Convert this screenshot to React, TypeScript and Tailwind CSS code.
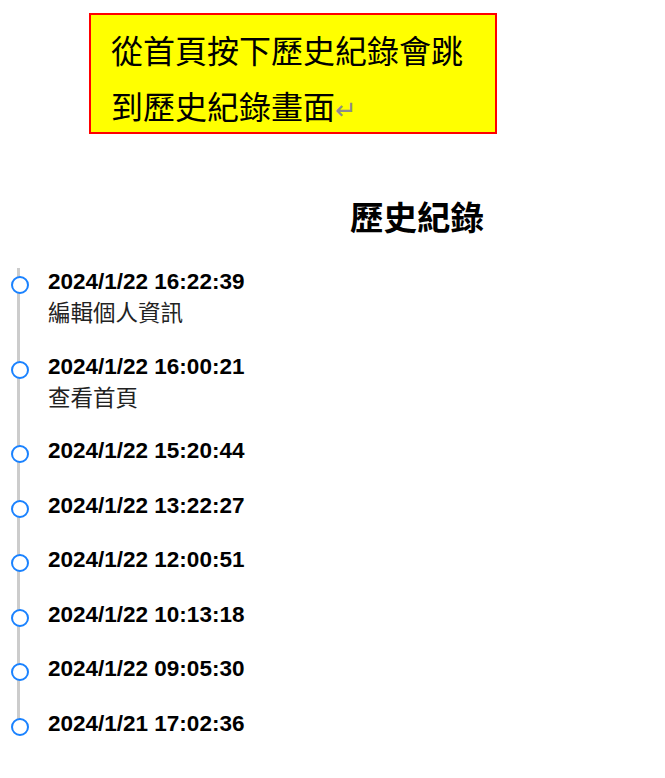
import React from 'react';

interface HistoryItem {
  time: string;
  action?: string;
}

const items: HistoryItem[] = [
  { time: '2024/1/22 16:22:39', action: '編輯個人資訊' },
  { time: '2024/1/22 16:00:21', action: '查看首頁' },
  { time: '2024/1/22 15:20:44' },
  { time: '2024/1/22 13:22:27' },
  { time: '2024/1/22 12:00:51' },
  { time: '2024/1/22 10:13:18' },
  { time: '2024/1/22 09:05:30' },
  { time: '2024/1/21 17:02:36' },
];

const App: React.FC = () => {
  return (
    <div className="min-h-[778px] bg-white font-['Liberation_Sans','Noto_Sans_CJK_TC',sans-serif] text-black">
      {/* 說明框 */}
      <div className="ml-[89px] pt-[13px]">
        <div className="w-[408px] h-[121px] border-2 border-[#ff0000] bg-[#ffff00] pl-[20px] pt-[6px] font-['Noto_Sans_CJK_TC',serif] text-[32px] leading-[56px] text-black">
          <p>從首頁按下歷史紀錄會跳</p>
          <p>
            到歷史紀錄畫面<span className="text-[#8c8c8c] text-[26px] font-['DejaVu_Sans',sans-serif]">↵</span>
          </p>
        </div>
      </div>

      <h1 className="mt-[62px] pl-[350px] text-[33.5px] leading-[40px] font-bold font-['Noto_Sans_CJK_TC',sans-serif]">
        歷史紀錄
      </h1>

      <ul className="mt-[32px]">
        {items.map((item, i) => (
          <li key={i} className="relative pl-[48px] pb-[26.5px]">
            <span
              className={
                i === items.length - 1
                  ? 'absolute left-[17px] top-0 h-[17px] w-[3px] bg-[#cccccc]'
                  : 'absolute left-[17px] top-0 bottom-0 w-[3px] bg-[#cccccc]'
              }
            />
            <span className="absolute left-[11px] top-[8px] h-[18px] w-[18px] rounded-full border-[2.5px] border-[#1a82ff] bg-white" />
            <p className="text-[22.5px] leading-[28px] font-bold">{item.time}</p>
            {item.action && (
              <p className="text-[22.5px] leading-[30px] text-[#222] font-['Noto_Sans_CJK_TC',sans-serif]">{item.action}</p>
            )}
          </li>
        ))}
      </ul>
    </div>
  );
};

export default App;
